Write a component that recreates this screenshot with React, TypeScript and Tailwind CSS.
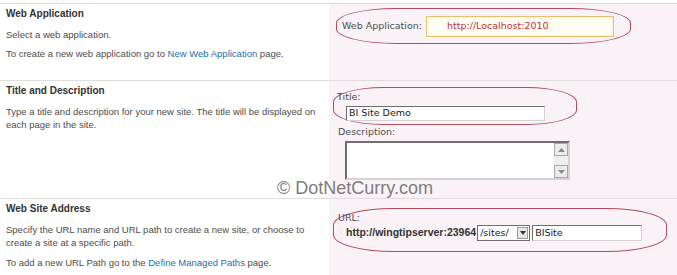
import React from 'react';

const font = { fontFamily: '"Liberation Sans", Arial, sans-serif' };
const fieldFont = { fontFamily: '"DejaVu Sans", Verdana, sans-serif' };

function Section({
	title,
	children,
	right,
	height,
}: {
	title: string;
	children: React.ReactNode;
	right: React.ReactNode;
	height: string;
}) {
	return (
		<div className={`flex border-t border-[#dedede] ${height}`}>
			<div className="w-[329px] shrink-0 px-[6px] pt-[3px] text-[9.5px] leading-[13px] text-[#4d4d4d]">
				<h3 className="mb-[8px] text-[10px] font-bold text-[#333]">{title}</h3>
				{children}
			</div>
			<div className="flex-1 bg-[#f9f2f6] text-[9.5px] text-[#4d4d4d]" style={fieldFont}>
				{right}
			</div>
		</div>
	);
}

function Link({ children }: { children: React.ReactNode }) {
	return <span className="text-[#1a6fb0]">{children}</span>;
}

const inset = 'border border-t-[#6e6e6e] border-l-[#6e6e6e] border-r-[#d4d4d4] border-b-[#d4d4d4] bg-white';

export default function App() {
	return (
		<div className="relative h-[275px] w-[677px] overflow-hidden bg-white pt-[3px]" style={font}>
			<Section
				title="Web Application"
				height="h-[77px]"
				right={
					<div className="ml-[7px] mt-[4px] flex h-[36px] w-[295px] items-center rounded-[60px/15px] border border-[#b84a5d] pl-[5px]">
						<span className="mr-[4px]">Web Application:</span>
						<div className="flex h-[21px] w-[188px] items-center border border-[#e3c173] bg-[#fffdf2] pl-[20px] text-[9.5px] text-[#c4303c] shadow-[inset_0_0_2px_#f3dca0]">
							http://Localhost:2010
						</div>
					</div>
				}
			>
				<p className="mb-[6px]">Select a web application.</p>
				<p>
					To create a new web application go to <Link>New Web Application</Link> page.
				</p>
			</Section>
			<Section
				title="Title and Description"
				height="h-[118px]"
				right={
					<div className="pl-[4px] pt-[6px]">
						<div className="flex h-[38px] w-[244px] flex-col rounded-[50px/15px] border border-[#b84a5d] pl-[3px] pt-[3px]">
							<span className="leading-[12px]">Title:</span>
							<div className={`ml-[9px] mt-[3px] flex h-[15px] w-[199px] items-center pl-[2px] text-[#222] ${inset}`}>
								BI Site Demo
							</div>
						</div>
						<div className="ml-[5px] mt-[1px] leading-[12px]">Description:</div>
						<div className="ml-[12px] mt-[3px] flex h-[39px] w-[225px] border-2 border-t-[#6e6e6e] border-l-[#6e6e6e] border-r-[#d4d4d4] border-b-[#d4d4d4] bg-white">
							<div className="flex-1" />
							<div className="flex w-[14px] flex-col justify-between bg-[#efefef]">
								<div className="flex h-[13px] items-center justify-center border border-[#a8a8a8] bg-[#ececec]">
									<svg width="7" height="4" viewBox="0 0 7 4">
										<path d="M0 4 L3.5 0 L7 4 Z" fill="#8a8a8a" />
									</svg>
								</div>
								<div className="flex h-[13px] items-center justify-center border border-[#a8a8a8] bg-[#ececec]">
									<svg width="7" height="4" viewBox="0 0 7 4">
										<path d="M0 0 L3.5 4 L7 0 Z" fill="#8a8a8a" />
									</svg>
								</div>
							</div>
						</div>
					</div>
				}
			>
				<p>Type a title and description for your new site. The title will be displayed on each page in the site.</p>
			</Section>
			<Section
				title="Web Site Address"
				height="h-[80px]"
				right={
					<div className="ml-[4px] mt-[9px] flex h-[44px] w-[334px] flex-col rounded-[60px/17px] border border-[#b84a5d] pl-[4px] pt-[3px]">
						<span className="leading-[12px]">URL:</span>
						<div className="ml-[8px] mt-[1px] flex items-center">
							<span className="text-[10.5px] font-bold text-[#333]" style={font}>
								http://wingtipserver:23964
							</span>
							<div className="ml-[1px] flex h-[16px] w-[53px] items-center justify-between border border-[#6e6e6e] bg-white pl-[2px] text-[#222]">
								/sites/
								<div className="mr-[1px] flex h-[12px] w-[11px] items-center justify-center border border-[#9a9a9a] bg-[#e6e6e6]">
									<svg width="6" height="4" viewBox="0 0 6 4">
										<path d="M0 0 L3 4 L6 0 Z" fill="#333" />
									</svg>
								</div>
							</div>
							<div className={`ml-[2px] flex h-[16px] w-[110px] items-center pl-[2px] text-[#222] ${inset}`}>
								BISite
							</div>
						</div>
					</div>
				}
			>
				<p className="mb-[7px]">
					Specify the URL name and URL path to create a new site, or choose to create a site at a specific path.
				</p>
				<p>
					To add a new URL Path go to the <Link>Define Managed Paths</Link> page.
				</p>
			</Section>
			<div className="absolute left-[277px] top-[175px] text-[18px] text-[#7d7d7d]">© DotNetCurry.com</div>
		</div>
	);
}
